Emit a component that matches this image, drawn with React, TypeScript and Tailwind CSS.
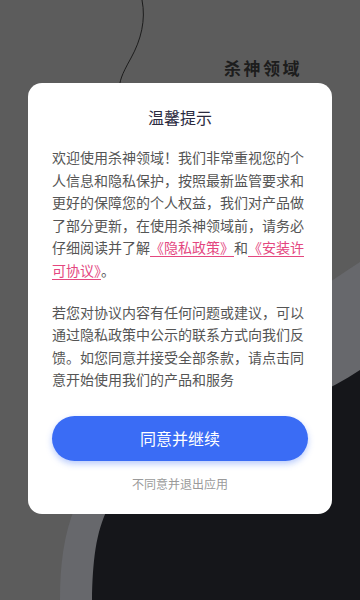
import React from 'react';

const font = { fontFamily: '"Noto Sans CJK SC", "Noto Sans", sans-serif' };

function Backdrop() {
  return (
    <svg className="absolute inset-0 h-full w-full" viewBox="0 0 360 600" preserveAspectRatio="none">
      <rect width="360" height="600" fill="#5c5c5c" />
      <path d="M60 600 C 60 520, 80 470, 150 420 C 240 350, 300 300, 360 262 L 360 600 Z" fill="#67686c" />
      <path d="M92 600 C 93 540, 100 500, 140 472 C 220 428, 300 410, 360 370 L 360 600 Z" fill="#15161a" />
      <path d="M142 0 C 146 20, 141 40, 131 58 S 120 80, 119 90" fill="none" stroke="#1c1c1c" strokeWidth="1" />
    </svg>
  );
}

export default function App() {
  return (
    <div className="relative h-[600px] w-[360px] overflow-hidden" style={font}>
      <Backdrop />
      <div className="relative flex h-full flex-col">
        <div className="flex h-[83px] justify-end pr-[58px] pt-[57px]">
          <span className="text-[17px] font-bold leading-[22px] tracking-[2.5px] text-[#1d1d1d]">杀神领域</span>
        </div>

        {/* Dialog */}
        <div className="mx-[28px] rounded-[14px] bg-white px-[24px] pb-[21px] pt-[22px]">
          <h2 className="text-center text-[16px] font-normal leading-[24px] text-[#2a2a3e]">温馨提示</h2>
          <p className="mt-[17px] text-[14px] leading-[22.6px] text-[#555555]">
            欢迎使用杀神领域！我们非常重视您的个人信息和隐私保护，按照最新监管要求和更好的保障您的个人权益，我们对产品做了部分更新，在使用杀神领域前，请务必仔细阅读并了解
            <span className="text-[#e4477f] underline underline-offset-[3px]">《隐私政策》</span>和
            <span className="text-[#e4477f] underline underline-offset-[3px]">《安装许可协议》</span>。
          </p>
          <p className="mt-[19px] text-[14px] leading-[22.6px] text-[#555555]">
            若您对协议内容有任何问题或建议，可以通过隐私政策中公示的联系方式向我们反馈。如您同意并接受全部条款，请点击同意开始使用我们的产品和服务
          </p>
          <button className="mt-[25px] flex h-[45px] w-full items-center justify-center rounded-full bg-[#3a6cf5] text-[16px] text-white shadow-[0_3px_6px_rgba(58,108,245,0.35)]">
            同意并继续
          </button>
          <div className="mt-[14px] text-center text-[12px] leading-[18px] text-[#9a9a9a]">不同意并退出应用</div>
        </div>
      </div>
    </div>
  );
}
